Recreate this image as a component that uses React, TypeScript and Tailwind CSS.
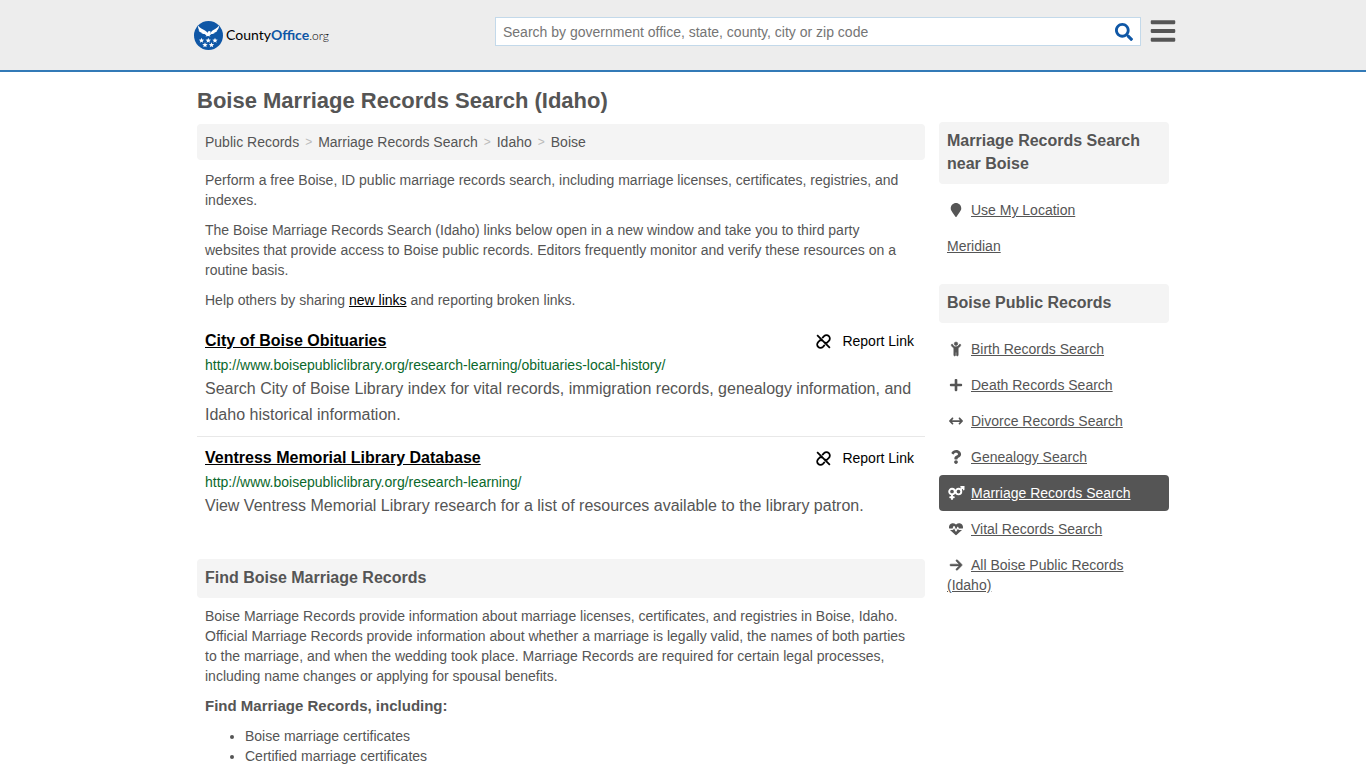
import { useState } from "react";
import { FaBars, FaMapMarker, FaPlus, FaQuestion, FaSearch } from "react-icons/fa";
import { FaArrowRight, FaArrowsLeftRight, FaChildReaching, FaHeartPulse } from "react-icons/fa6";

const CRUMBS = ["Public Records", "Marriage Records Search", "Idaho", "Boise"];

const RESOURCES = [
  {
    title: "City of Boise Obituaries",
    url: "http://www.boisepubliclibrary.org/research-learning/obituaries-local-history/",
    description:
      "Search City of Boise Library index for vital records, immigration records, genealogy information, and Idaho historical information.",
  },
  {
    title: "Ventress Memorial Library Database",
    url: "http://www.boisepubliclibrary.org/research-learning/",
    description:
      "View Ventress Memorial Library research for a list of resources available to the library patron.",
  },
];

interface RecordLink {
  label: string;
  icon?: React.ComponentType<{ className?: string }>;
  bold?: boolean;
  active?: boolean;
}

function VenusMarsIcon({ className }: { className?: string }) {
  return (
    <svg
      viewBox="0 0 18 14"
      className={className}
      fill="none"
      stroke="currentColor"
      strokeWidth="1.9"
      strokeLinecap="round"
      aria-hidden="true"
    >
      <circle cx="5" cy="5.6" r="2.8" />
      <circle cx="11.5" cy="5.6" r="2.8" />
      <path d="M5 8.5v4.6M3.2 11.3h3.6" />
      <path d="M13.6 3.6 16.4 1M14 .9h2.7v2.7" strokeWidth="1.6" />
    </svg>
  );
}

const RECORD_LINKS: RecordLink[] = [
  { label: "Birth Records Search", icon: FaChildReaching, bold: true },
  { label: "Death Records Search", icon: FaPlus },
  { label: "Divorce Records Search", icon: FaArrowsLeftRight },
  { label: "Genealogy Search", icon: FaQuestion },
  { label: "Marriage Records Search", icon: VenusMarsIcon, active: true },
  { label: "Vital Records Search", icon: FaHeartPulse },
  { label: "All Boise Public Records (Idaho)", icon: FaArrowRight, bold: true },
];

const STARS = [
  [15, 39],
  [28.5, 39],
  [42, 39],
  [22, 48],
  [35, 48],
];

function Logo() {
  return (
    <a href="#" className="flex items-center gap-[3px] font-[Lato,sans-serif] text-sm text-black">
      <svg viewBox="0 0 58 58" className="size-[29px]" aria-hidden="true">
        <circle cx="29" cy="29" r="29" fill="#0f57a6" />
        <path
          fill="#fff"
          d="M8 9c4 6 9 7 14 10 3 2 4 3 5 5l1-3 3-1 3 2-2 2 1 1c1-3 2-4 4-6 5-3 9-5 13-10 0 5-1 8-5 10l2 0c-2 3-4 4-7 4l2 1c-2 1-5 2-7 2l-4 3 2 2-5-1-5 1 2-2-4-3c-2 0-5-1-7-2l2-1c-3 0-5-1-7-4l2 0C9 17 8 14 8 9z"
        />
        {STARS.map(([x, y]) => (
          <path
            key={`${x}-${y}`}
            transform={`translate(${x} ${y})`}
            fill="#fff"
            d="M0-5.5 1.4-1.8 5.4-1.7 2.3.8 3.4 4.7 0 2.5-3.4 4.7-2.3.8-5.4-1.7-1.4-1.8z"
          />
        ))}
      </svg>
      <span>
        County<span className="font-bold text-[#0f57a6]">Office</span>
        <span className="text-xs font-light">.org</span>
      </span>
    </a>
  );
}

function UnlinkIcon() {
  return (
    <svg
      viewBox="0 0 16 16"
      className="size-[15px]"
      fill="none"
      stroke="currentColor"
      strokeWidth="1.9"
      aria-hidden="true"
    >
      <path d="M1.2 1.2 14.8 14.8" />
      <path d="M6.6 4.4 8.6 2.3a3.6 3.6 0 0 1 5.1 5.1L11.6 9.5 9.2 9.2" />
      <path d="M9.4 11.6 7.4 13.7a3.6 3.6 0 0 1-5.1-5.1L4.4 6.5 6.8 6.8" />
    </svg>
  );
}

function SectionHeading({ children }: { children: React.ReactNode }) {
  return (
    <h2 className="rounded bg-[#f4f4f4] px-2 pt-[7px] pb-[9px] text-base leading-[23px] font-bold">
      {children}
    </h2>
  );
}

function SideLink({ label, icon: Icon, bold, active }: RecordLink) {
  return (
    <li>
      <a href="#" className={`block rounded p-2 ${active ? "bg-[#555] text-white" : ""}`}>
        {Icon && (
          <span className="mr-1.5 inline-flex w-[18px] justify-center align-[-2px]">
            <Icon className={`h-3.5 w-auto shrink-0 overflow-visible ${bold ? "stroke-[20px]" : ""}`} />
          </span>
        )}
        <span className="underline">{label}</span>
      </a>
    </li>
  );
}

export default function App() {
  const [query, setQuery] = useState("");

  return (
    <div className="min-h-screen bg-white font-['Liberation_Sans',Arial,sans-serif] text-sm leading-5 text-[#555]">
      <header className="border-b-2 border-[#337ab7] bg-[#ededed]">
        <div className="mx-auto flex h-[70px] max-w-[988px] items-center justify-between pl-[5px]">
          <Logo />
          <div className="mb-2 flex items-center gap-2">
            <form role="search" className="flex h-[29px] w-[646px] border border-[#c3d9ea] bg-white pt-0.5">
              <input
                type="search"
                aria-label="Search"
                value={query}
                onChange={(e) => setQuery(e.target.value)}
                placeholder="Search by government office, state, county, city or zip code"
                className="min-w-0 flex-1 px-[7px] placeholder:text-[#757575] focus:outline-none"
              />
              <button type="submit" aria-label="Submit search" className="px-[7px] text-lg text-[#0f57a6]">
                <FaSearch />
              </button>
            </form>
            <button type="button" aria-label="Menu" className="text-[28px]">
              <FaBars />
            </button>
          </div>
        </div>
      </header>

      <div className="mx-auto flex max-w-[972px] items-start gap-3.5">
        <main className="min-w-0 flex-1 pt-3.5 pb-10">
          <h1 className="text-[22px] leading-[30px] font-bold">Boise Marriage Records Search (Idaho)</h1>

          <nav aria-label="Breadcrumb" className="mt-2 rounded bg-[#f4f4f4] p-2">
            <ol className="flex">
              {CRUMBS.map((crumb, i) => (
                <li key={crumb} className="flex">
                  {i > 0 && <span className="px-1.5 text-xs leading-5 text-[#bbb]">&gt;</span>}
                  <a href="#">{crumb}</a>
                </li>
              ))}
            </ol>
          </nav>

          <div className="space-y-2.5 px-2 py-2.5">
            <p>
              Perform a free Boise, ID public marriage records search, including marriage licenses,
              certificates, registries, and indexes.
            </p>
            <p>
              The Boise Marriage Records Search (Idaho) links below open in a new window and take you to
              third party websites that provide access to Boise public records. Editors frequently monitor
              and verify these resources on a routine basis.
            </p>
            <p>
              Help others by sharing{" "}
              <a href="#" className="text-black underline">
                new links
              </a>{" "}
              and reporting broken links.
            </p>
          </div>

          <ul className="divide-y divide-[#e8e8e8]">
            {RESOURCES.map((item) => (
              <li key={item.title} className="px-2 pt-[11px] pb-2">
                <div className="flex justify-between text-black">
                  <a href="#" className="text-base leading-5 font-bold underline">
                    {item.title}
                  </a>
                  <button type="button" className="mr-[3px] flex items-center gap-[11px]">
                    <UnlinkIcon />
                    Report Link
                  </button>
                </div>
                <p className="mt-1 text-[#0a682b]">{item.url}</p>
                <p className="mt-px text-base leading-[26px]">{item.description}</p>
              </li>
            ))}
          </ul>

          <section className="mt-8">
            <SectionHeading>Find Boise Marriage Records</SectionHeading>
            <div className="space-y-2.5 p-2">
              <p>
                Boise Marriage Records provide information about marriage licenses, certificates, and
                registries in Boise, Idaho. Official Marriage Records provide information about whether a
                marriage is legally valid, the names of both parties to the marriage, and when the wedding
                took place. Marriage Records are required for certain legal processes, including name
                changes or applying for spousal benefits.
              </p>
              <h3 className="text-[15px] leading-5 font-bold">Find Marriage Records, including:</h3>
              <ul className="list-disc pl-10">
                <li>Boise marriage certificates</li>
                <li>Certified marriage certificates</li>
              </ul>
            </div>
          </section>
        </main>

        <aside className="mt-[50px] w-[230px] shrink-0 space-y-5">
          <section>
            <SectionHeading>Marriage Records Search near Boise</SectionHeading>
            <ul className="mt-2">
              <SideLink label="Use My Location" icon={FaMapMarker} />
              <SideLink label="Meridian" />
            </ul>
          </section>
          <section>
            <SectionHeading>Boise Public Records</SectionHeading>
            <ul className="mt-2">
              {RECORD_LINKS.map((link) => (
                <SideLink key={link.label} {...link} />
              ))}
            </ul>
          </section>
        </aside>
      </div>
    </div>
  );
}
